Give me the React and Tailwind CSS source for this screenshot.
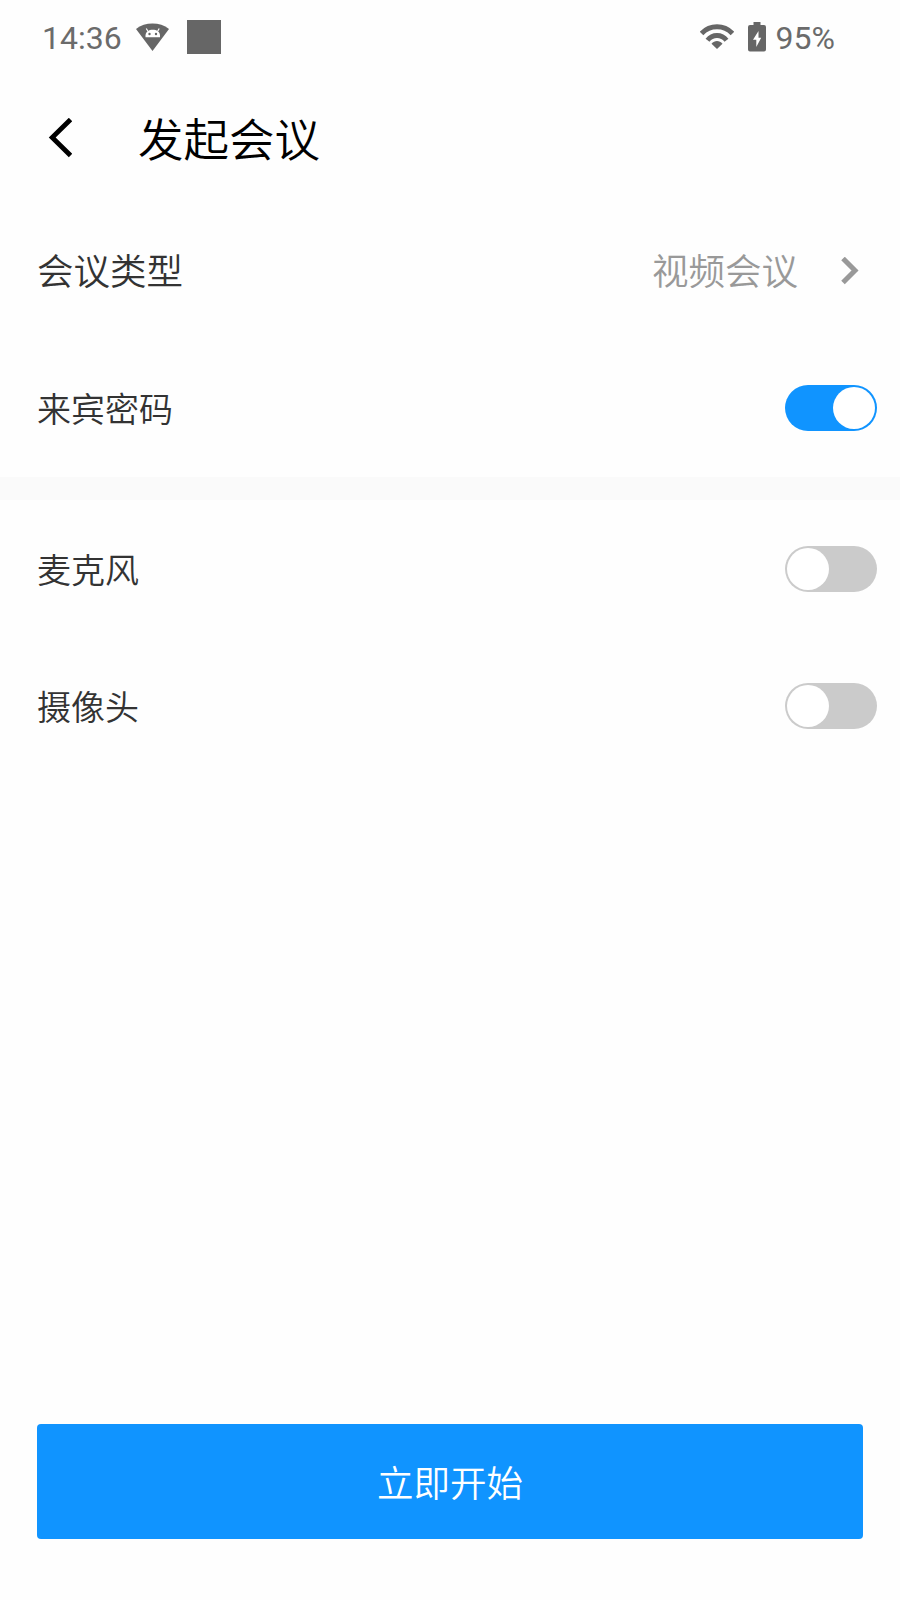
import React, { useState } from 'react'

function StatusBar() {
    return (
        <div className="flex h-[74px] items-center justify-between pl-[42px] pr-[65px] font-[Roboto,sans-serif] text-[32px] font-normal text-[#6b6b6b]">
            <div className="flex items-center">
                <span className="w-[94px] pt-[2px]">14:36</span>
                <svg className="h-7 w-[33px] text-[#666666]" viewBox="0 0 33 28" fill="currentColor">
                    <path d="M0 6C4.500 2.200 10.500 0.500 16.500 0.500S28.500 2.200 33 6L16.500 28Z" />
                    <path d="M12 8.500L10.300 5.500M21.500 8.500L23.200 5.500" fill="none" stroke="white" strokeWidth="1.2" />
                    <path d="M9.500 14.200V12.500C9.500 4.800 24 4.800 24 12.500V14.200Z" fill="white" />
                    <circle cx="13.500" cy="11" r="1.200" />
                    <circle cx="20" cy="11" r="1.200" />
                </svg>
                <span className="ml-[18px] size-[34px] bg-[#666666]"></span>
            </div>
            <div className="flex items-center">
                <svg className="mb-[2px] h-[25px] w-[34px] text-[#666666]" viewBox="0 0 34 25" fill="none" stroke="currentColor" strokeWidth="5">
                    <path d="M1.500 9.500C10 0.500 24 0.500 32.500 9.500" />
                    <path d="M7.500 16.200C12.500 10 21.500 10 26.500 16.200" />
                    <path d="M11.500 19.800C14.500 16.200 19.500 16.200 22.500 19.800L17 25Z" fill="currentColor" stroke="none" />
                </svg>
                <svg className="ml-[14px] h-[30px] w-[18px] text-[#666666]" viewBox="0 0 18 30" fill="currentColor">
                    <path d="M5.500 0H12.500V3H16Q18 3 18 5V27.500Q18 29.500 16 29.500H2Q0 29.500 0 27.500V5Q0 3 2 3H5.500Z" />
                    <path d="M10.500 9L5 17.800H8.300V25L13.200 15.800H10.500Z" fill="white" />
                </svg>
                <span className="ml-[10px] pt-[2px]">95%</span>
            </div>
        </div>
    )
}

function Toggle({ checked, onChange }) {
    return (
        <button
            type="button"
            role="switch"
            aria-checked={checked}
            onClick={() => onChange(!checked)}
            className={`flex h-[46px] w-[92px] items-center rounded-full px-[2px] ${checked ? 'justify-end bg-[#1094ff]' : 'justify-start bg-[#cbcbcb]'}`}
        >
            <span className="size-[42px] rounded-full bg-white"></span>
        </button>
    )
}

function SwitchRow({ label, checked, onChange }) {
    return (
        <div className="flex h-[137px] items-center justify-between pl-[37px] pr-[23px]">
            <span className="text-[34px] leading-[50px]">{label}</span>
            <Toggle checked={checked} onChange={onChange} />
        </div>
    )
}

function App() {
    const [password, setPassword] = useState(true)
    const [mic, setMic] = useState(false)
    const [camera, setCamera] = useState(false)

    return (
        <div className="flex h-[1600px] w-[900px] flex-col bg-[#fefefe] font-['Noto_Sans_CJK_SC',sans-serif] font-[350] text-[#333333]">
            <StatusBar />

            <header className="flex h-[128px] items-center pl-[48px] text-black">
                <svg className="h-10 w-6" viewBox="0 0 24 40" fill="none" stroke="currentColor" strokeWidth="4.8">
                    <path d="M22.500 1.500L4.200 19.500L22.500 37.500" />
                </svg>
                <h1 className="ml-[66px] pb-[2px] text-[45.5px] leading-[66px]">发起会议</h1>
            </header>

            <div className="flex h-[137px] items-center pl-[37px] pr-[41px] text-[36.5px] leading-[54px]">
                <span className="pb-px">会议类型</span>
                <span className="ml-auto pb-px text-[#999999]">视频会议</span>
                <svg className="ml-[43px] h-7 w-[18px] text-[#999999]" viewBox="0 0 18 28" fill="none" stroke="currentColor" strokeWidth="5">
                    <path d="M2 1.500L14 13.500L2 25.500" />
                </svg>
            </div>
            <SwitchRow label="来宾密码" checked={password} onChange={setPassword} />

            <div className="mt-px h-[23px] bg-[#fafafa]"></div>

            <SwitchRow label="麦克风" checked={mic} onChange={setMic} />
            <SwitchRow label="摄像头" checked={camera} onChange={setCamera} />

            <button type="button" className="mx-[37px] mb-[61px] mt-auto h-[115px] rounded bg-[#1094ff] pt-[2px] text-[36.5px] text-white">
                立即开始
            </button>
        </div>
    )
}

export default App
